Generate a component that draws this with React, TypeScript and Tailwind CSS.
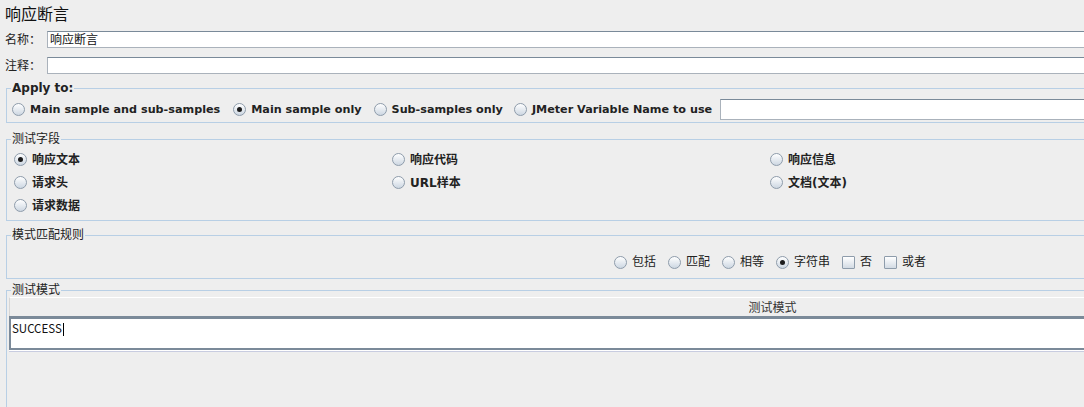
import type { ReactNode } from 'react';

const FONT = "font-['DejaVu_Sans','Noto_Sans_CJK_SC',sans-serif]";

function Radio({ checked = false }: { checked?: boolean }) {
  return (
    <span className="inline-flex h-[13px] w-[13px] shrink-0 items-center justify-center rounded-full border border-[#8e9cab] bg-gradient-to-b from-white to-[#cdd7e2]">
      {checked && <span className="h-[5px] w-[5px] rounded-full bg-[#1c1c1c]" />}
    </span>
  );
}

function Check() {
  return (
    <span className="inline-block h-[13px] w-[13px] shrink-0 rounded-[1px] border border-[#8e9cab] bg-gradient-to-b from-white to-[#d3dbe4]" />
  );
}

function Option({
  checked = false,
  bold = false,
  children,
}: {
  checked?: boolean;
  bold?: boolean;
  children: ReactNode;
}) {
  return (
    <label className="flex items-center gap-[5px] whitespace-nowrap">
      <Radio checked={checked} />
      <span className={bold ? 'font-bold text-[#222]' : 'text-[#222]'}>{children}</span>
    </label>
  );
}

function TextField({ value = '', className = '' }: { value?: string; className?: string }) {
  return (
    <div
      className={`flex items-center border border-[#aab2bb] border-t-[#7a8a99] bg-white pl-[2px] text-[12px] leading-[14px] text-[#111] ${className}`}
    >
      {value}
    </div>
  );
}

function Legend({ children, bold = false }: { children: ReactNode; bold?: boolean }) {
  return (
    <legend
      className={`ml-[2px] px-[1px] text-[12px] leading-[14px] text-[#222] ${bold ? 'font-bold' : ''}`}
    >
      {children}
    </legend>
  );
}

export default function App() {
  return (
    <div className={`h-[407px] w-[1084px] overflow-hidden bg-[#eeeeee] ${FONT}`}>
      <div className="w-[1560px]">
        {/* title */}
        <div className="h-[25px] pl-[5px] pt-[5px] text-[16px] leading-[20px] text-[#111]">
          响应断言
        </div>

        {/* name / comment */}
        <div className="mt-[6px] flex items-center">
          <span className="w-[47px] pl-[5px] text-[12px] leading-[14px] text-[#222]">名称：</span>
          <TextField value="响应断言" className="h-[17px] flex-1" />
        </div>
        <div className="mt-[9px] flex items-center">
          <span className="w-[47px] pl-[5px] text-[12px] leading-[14px] text-[#222]">注释：</span>
          <TextField className="h-[17px] flex-1" />
        </div>

        {/* apply to */}
        <fieldset className="ml-[6px] mt-[7px] w-[1530px] border border-[#b8cfe5] pb-[2px] pl-[2px]">
          <Legend bold>Apply to:</Legend>
          <div className="flex items-center pl-[3px] pt-[4px] text-[11.2px] leading-[14px]">
            <Option bold>Main sample and sub-samples</Option>
            <span className="w-[13px]" />
            <Option bold checked>
              Main sample only
            </Option>
            <span className="w-[12px]" />
            <Option bold>Sub-samples only</Option>
            <span className="w-[11px]" />
            <Option bold>JMeter Variable Name to use</Option>
            <span className="w-[8px]" />
            <TextField className="h-[21px] flex-1" />
          </div>
        </fieldset>

        {/* fields to test */}
        <fieldset className="ml-[6px] mt-[9px] w-[1530px] border border-[#b8cfe5] pb-[3px] pl-[2px]">
          <Legend>测试字段</Legend>
          <div className="grid grid-cols-[378px_378px_378px_378px] pl-[5px] pt-[2px] text-[12px] leading-[14px]">
            <div className="flex h-[23px] items-center">
              <Option bold checked>
                响应文本
              </Option>
            </div>
            <div className="flex h-[23px] items-center">
              <Option bold>响应代码</Option>
            </div>
            <div className="flex h-[23px] items-center">
              <Option bold>响应信息</Option>
            </div>
            <div />
            <div className="flex h-[23px] items-center">
              <Option bold>请求头</Option>
            </div>
            <div className="flex h-[23px] items-center">
              <Option bold>URL样本</Option>
            </div>
            <div className="flex h-[23px] items-center">
              <Option bold>文档(文本)</Option>
            </div>
            <div />
            <div className="flex h-[23px] items-center">
              <Option bold>请求数据</Option>
            </div>
          </div>
        </fieldset>

        {/* pattern matching rules */}
        <fieldset className="ml-[6px] mt-[7px] w-[1530px] border border-[#b8cfe5] pl-[2px]">
          <Legend>模式匹配规则</Legend>
          <div className="flex h-[36px] items-center justify-center pb-[3px] pr-[4px] pt-[7px] text-[12px] leading-[14px]">
            <div className="flex items-center gap-[12px]">
              <Option>包括</Option>
              <Option>匹配</Option>
              <Option>相等</Option>
              <Option checked>字符串</Option>
              <label className="flex items-center gap-[5px]">
                <Check />
                <span className="text-[#222]">否</span>
              </label>
              <label className="flex items-center gap-[5px]">
                <Check />
                <span className="text-[#222]">或者</span>
              </label>
            </div>
          </div>
        </fieldset>

        {/* patterns to test */}
        <fieldset className="ml-[6px] mt-[4px] h-[160px] w-[1530px] border border-[#b8cfe5] pl-[2px]">
          <Legend>测试模式</Legend>
          <div className="w-[1526px] text-[12px] leading-[14px]">
            <div className="flex h-[19px] items-center justify-center border-l border-t border-l-[#d6d6d6] border-t-white pt-[2px] text-[#333]">
              测试模式
            </div>
            <div className="h-[34px] border-b-2 border-l-2 border-t-[3px] border-[#7b8a99] bg-white pl-[1px] pt-[2px]">
              <span className="font-['Noto_Sans_CJK_SC',sans-serif] text-[11.5px] leading-[14px] text-[#111]">
                SUCCESS
              </span>
              <span className="ml-[1px] inline-block h-[13px] w-px bg-black align-middle" />
            </div>
            <div className="h-px bg-white" />
            <div className="h-px bg-[#c8cce0]" />
          </div>
        </fieldset>
      </div>
    </div>
  );
}
